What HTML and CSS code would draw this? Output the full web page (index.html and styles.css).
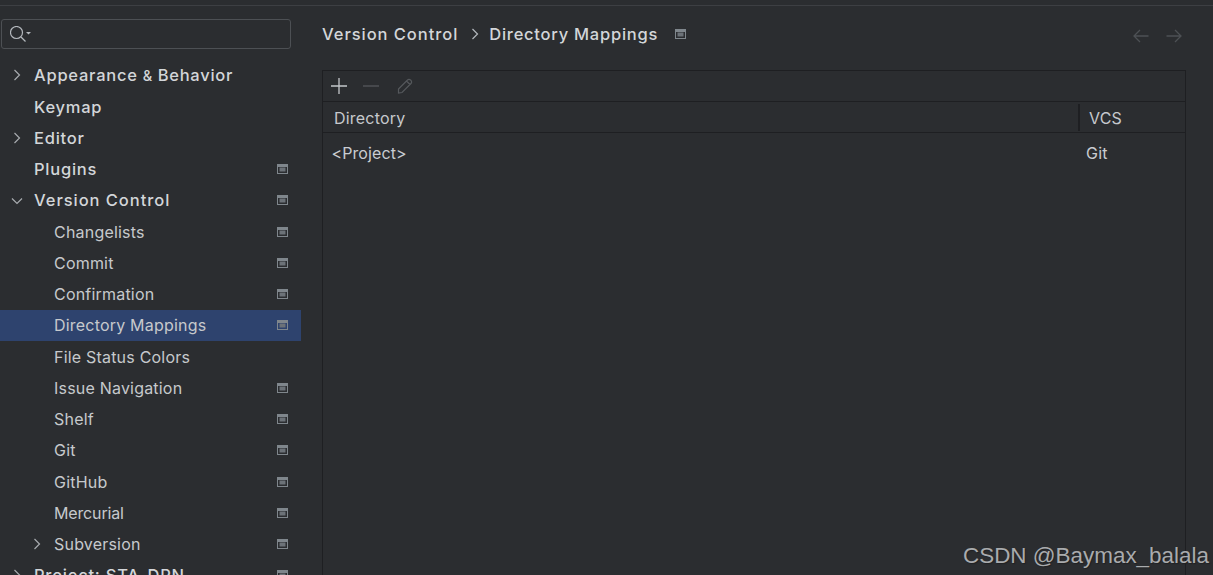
FILE: index.html
```html
<!DOCTYPE html>
<html lang="en">
<head>
<meta charset="utf-8">
<title>Directory Mappings</title>
<link rel="stylesheet" href="styles.css">
</head>
<body>
<svg class="defs" width="0" height="0" aria-hidden="true">
  <symbol id="chev" viewBox="0 0 8 12"><path d="M1.5 1 L6.5 6 L1.5 11" fill="none" stroke="currentColor" stroke-width="1.2"/></symbol>
  <symbol id="chevd" viewBox="0 0 12 8"><path d="M1 1.5 L6 6.5 L11 1.5" fill="none" stroke="currentColor" stroke-width="1.2"/></symbol>
  <symbol id="proj" viewBox="0 0 11 10"><rect x=".5" y=".5" width="10" height="9" fill="none" stroke="#7f868c"/><rect x="1" y="1" width="9" height="2" fill="#7f868c"/><rect x="2.5" y="3.5" width="6" height="4" fill="#6c7278"/></symbol>
</svg>
<div class="app">
  <aside class="sidebar">
    <div class="search">
      <svg class="search-icon" width="22" height="17" viewBox="0 0 22 17"><circle cx="6.5" cy="6.5" r="6" fill="none" stroke="#b4b8bd" stroke-width="1.2"/><path d="M11 11 L15.5 15.5" stroke="#b4b8bd" stroke-width="1.3"/><path d="M16 6 H21 L18.5 8.5 Z" fill="#b4b8bd"/></svg>
    </div>
    <ul class="tree">
      <li class="row top"><svg class="arrow"><use href="#chev"/></svg><span class="label">Appearance <span class="amp">&amp;</span> Behavior</span></li>
      <li class="row top"><span class="label">Keymap</span></li>
      <li class="row top"><svg class="arrow"><use href="#chev"/></svg><span class="label">Editor</span></li>
      <li class="row top"><span class="label">Plugins</span><svg class="pin"><use href="#proj"/></svg></li>
      <li class="row top"><svg class="arrow down"><use href="#chevd"/></svg><span class="label wide">Version Control</span><svg class="pin"><use href="#proj"/></svg></li>
      <li class="row sub"><span class="label">Changelists</span><svg class="pin"><use href="#proj"/></svg></li>
      <li class="row sub"><span class="label">Commit</span><svg class="pin"><use href="#proj"/></svg></li>
      <li class="row sub"><span class="label">Confirmation</span><svg class="pin"><use href="#proj"/></svg></li>
      <li class="row sub selected"><span class="label">Directory Mappings</span><svg class="pin"><use href="#proj"/></svg></li>
      <li class="row sub"><span class="label">File Status Colors</span></li>
      <li class="row sub"><span class="label">Issue Navigation</span><svg class="pin"><use href="#proj"/></svg></li>
      <li class="row sub"><span class="label">Shelf</span><svg class="pin"><use href="#proj"/></svg></li>
      <li class="row sub"><span class="label">Git</span><svg class="pin"><use href="#proj"/></svg></li>
      <li class="row sub"><span class="label">GitHub</span><svg class="pin"><use href="#proj"/></svg></li>
      <li class="row sub"><span class="label tight">Mercurial</span><svg class="pin"><use href="#proj"/></svg></li>
      <li class="row sub"><svg class="arrow"><use href="#chev"/></svg><span class="label">Subversion</span><svg class="pin"><use href="#proj"/></svg></li>
      <li class="row top"><svg class="arrow"><use href="#chev"/></svg><span class="label">Project: STA-DPN</span><svg class="pin"><use href="#proj"/></svg></li>
    </ul>
  </aside>
  <main class="content">
    <header class="crumbs">
      <span class="crumb wide">Version Control</span>
      <svg class="crumb-sep"><use href="#chev"/></svg>
      <span class="crumb">Directory Mappings</span>
      <svg class="crumb-pin"><use href="#proj"/></svg>
      <span class="nav">
        <svg width="16" height="14" viewBox="0 0 16 14"><path d="M15.5 7 H1 M7 1 L1 7 L7 13" fill="none" stroke="#4d5054" stroke-width="1.3"/></svg>
        <svg width="16" height="14" viewBox="0 0 16 14"><path d="M.5 7 H15 M9 1 L15 7 L9 13" fill="none" stroke="#4d5054" stroke-width="1.3"/></svg>
      </span>
    </header>
    <section class="panel">
      <div class="toolbar">
        <svg width="16" height="16" viewBox="0 0 16 16"><path d="M8 0 V16 M0 8 H16" stroke="#c4c7ca" stroke-width="1.3"/></svg>
        <svg width="16" height="16" viewBox="0 0 16 16"><path d="M0 8 H16" stroke="#55585c" stroke-width="1.3"/></svg>
        <svg class="tool-edit" width="16" height="16" viewBox="0 0 16 16"><path d="M1.5 11 L10.5 2 Q12 .8 13.8 2.2 Q15.3 4 14 5.5 L5 14.5 L1.5 15 Z M9.5 3 L13 6.5" fill="none" stroke="#55585c" stroke-width="1.2"/></svg>
      </div>
      <div class="thead">
        <span class="th-dir">Directory</span>
        <span class="th-vcs">VCS</span>
      </div>
      <div class="tbody-row">
        <span class="td-dir">&lt;Project&gt;</span>
        <span class="td-vcs">Git</span>
      </div>
    </section>
  </main>
</div>
<div class="watermark">CSDN @Baymax_balala</div>
</body>
</html>
```
FILE: styles.css
```css
* { box-sizing: border-box; }
html, body { margin: 0; height: 100%; }
body {
  width: 1213px;
  height: 575px;
  overflow: hidden;
  position: relative;
  background: #2b2d30;
  color: #c9ccd0;
  font-family: Inter, "Liberation Sans", sans-serif;
  font-size: 16px;
}
.defs { position: absolute; }
.app {
  display: flex;
  height: 575px;
  margin-top: 5px;
  border-top: 1px solid #3d3f43;
}
.sidebar { width: 322px; flex: none; }
.search {
  width: 290px;
  height: 30px;
  margin: 13px 0 0 1px;
  border: 1px solid #4d5054;
  border-radius: 3px;
  background: #2b2d30;
  display: flex;
  align-items: center;
  padding: 1px 0 0 8px;
}
.search-icon { display: block; }
.tree { list-style: none; margin: 10.75px 0 0; padding: 0; width: 301px; }
.row {
  height: 31.25px;
  display: flex;
  align-items: center;
  position: relative;
}
.top { padding-left: 34px; }
.top .label { font-weight: 500; font-size: 16.5px; letter-spacing: .75px; color: #d3d6d9; }
.top .amp { font-size: 14.5px; letter-spacing: .2px; }
.top .label.wide, .crumb.wide { letter-spacing: .95px; }
.sub { padding-left: 54px; }
.sub .label { font-size: 16px; letter-spacing: .2px; color: #c6c9cc; }
.sub .tight { letter-spacing: -.15px; }
.selected { background: #2e436e; }
.arrow { position: absolute; width: 8px; height: 12px; color: #a8abaf; left: 13px; top: 9.5px; }
.sub .arrow { left: 33px; }
.arrow.down { width: 12px; height: 8px; left: 11px; top: 12px; }
.pin { margin-left: auto; margin-right: 13px; width: 11px; height: 10px; }
.content { flex: 1; min-width: 0; padding-right: 27px; }
.crumbs {
  display: flex;
  align-items: center;
  height: 30px;
  margin-top: 13px;
  margin-bottom: 21px;
}
.crumb { font-weight: 500; font-size: 16.5px; letter-spacing: .75px; color: #d3d6d9; }
.crumb-sep { width: 8px; height: 12px; margin: 0 10px 0 13px; color: #b4b8bd; }
.crumb-pin { width: 11px; height: 10px; margin-left: 17px; }
.nav { margin-left: auto; display: flex; gap: 17px; margin-right: 4px; padding-top: 3px; }
.panel { border: 1px solid #1e1f22; border-bottom: 0; height: 510px; }
.toolbar {
  height: 31px;
  display: flex;
  align-items: center;
  gap: 16px;
  padding: 0 0 1px 8px;
  border-bottom: 1px solid #1e1f22;
}
.tool-edit { margin-left: 2px; }
.thead {
  height: 31px;
  display: flex;
  align-items: center;
  border-bottom: 1px solid #1e1f22;
}
.th-dir { width: 755px; padding: 1px 0 0 11px; font-size: 16px; letter-spacing: .2px; color: #c6c9cc; }
.th-vcs {
  flex: 1;
  height: 27px;
  line-height: 29px;
  padding-left: 9px;
  border-left: 2px solid #1e1f22;
  font-size: 16px;
  letter-spacing: .2px;
  color: #c6c9cc;
}
.tbody-row { display: flex; height: 40px; align-items: center; }
.td-dir { width: 754px; padding-left: 8.5px; font-size: 16px; letter-spacing: .1px; }
.td-vcs { padding-left: 9px; font-size: 16px; letter-spacing: .2px; }
.watermark {
  position: absolute;
  right: 4px;
  bottom: 6px;
  font-family: "Liberation Sans", sans-serif;
  font-size: 22.45px;
  color: #a9abad;
  text-shadow: 1px 1px 1px #202123;
}
```
